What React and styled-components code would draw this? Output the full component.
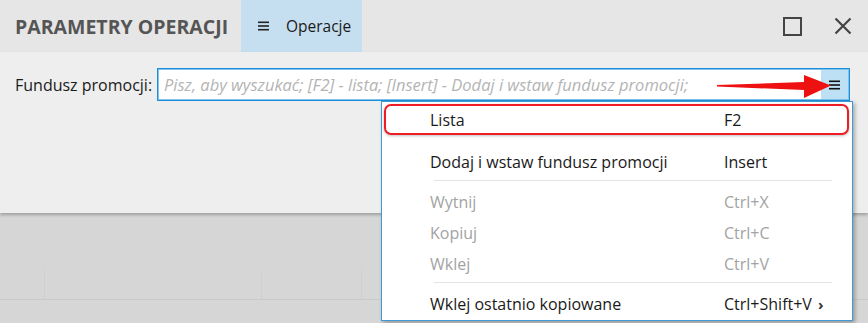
import React from "react";
import styled, { createGlobalStyle } from "styled-components";

const Global = createGlobalStyle`
  html, body { margin: 0; padding: 0; }
  body {
    width: 868px; height: 323px; overflow: hidden;
    font-family: "Open Sans", "Noto Sans", sans-serif;
    background: #d6d6d6;
  }
`;

const Page = styled.div`
  position: relative;
  width: 868px;
  height: 323px;
  display: flex;
  flex-direction: column;
  background: #d6d6d6;
`;

const Header = styled.div`
  height: 52px;
  display: flex;
  align-items: stretch;
  background: #e6e6e6;
`;

const Title = styled.div`
  display: flex;
  align-items: center;
  padding: 0 0 0 15px;
  width: 226px;
  box-sizing: border-box;
  font-size: 19.5px;
  font-weight: 700;
  color: #555555;
  white-space: nowrap;
`;

const Tab = styled.div`
  display: flex;
  align-items: center;
  gap: 17px;
  margin-left: 15px;
  padding: 0 0 0 17px;
  width: 121px;
  box-sizing: border-box;
  background: #c6dff0;
  font-size: 15.5px;
  color: #1a1a1a;
`;

const Spacer = styled.div`flex: 1;`;

const WinButtons = styled.div`
  display: flex;
  align-items: center;
  gap: 32px;
  padding-right: 16px;
`;

const Body = styled.div`
  height: 161px;
  background: #eeeeee;
  padding: 16px 18px 0 15px;
  box-sizing: border-box;
  box-shadow: 0 2px 3px rgba(0,0,0,0.25);
  position: relative;
  z-index: 1;
`;

const FieldRow = styled.div`
  display: flex;
  align-items: center;
`;

const Label = styled.div`
  width: 142px;
  font-size: 16px;
  color: #1a1a1a;
  white-space: nowrap;
`;

const Input = styled.div`
  flex: 1;
  height: 33px;
  box-sizing: border-box;
  border: 1px solid #1e8fd6;
  box-shadow: inset 0 0 0 1px #7cc3ee;
  background: #ffffff;
  display: flex;
  align-items: stretch;
  padding: 1px;
`;

const Placeholder = styled.div`
  flex: 1;
  display: flex;
  align-items: center;
  padding-left: 5px;
  font-size: 16.5px;
  font-style: italic;
  color: #b4b4b4;
  white-space: nowrap;
  overflow: hidden;
`;

const DropButton = styled.div`
  width: 27px;
  background: #bde0f5;
  display: flex;
  align-items: center;
  justify-content: center;
`;

const Lower = styled.div`
  flex: 1;
  position: relative;
  display: flex;
  flex-direction: column;
  padding-top: 57px;
`;

const GridRow = styled.div`
  height: 29px;
  display: grid;
  grid-template-columns: 45px 217px 100px 1fr;
  border-bottom: 1px solid #cacaca;
`;

const GridCell = styled.div`
  border-right: 1px dotted #c8c8c8;
`;

const Menu = styled.div`
  position: absolute;
  left: 381px;
  top: 101px;
  width: 472px;
  height: 220px;
  box-sizing: border-box;
  background: #ffffff;
  border: 1px solid #3d9ad6;
  box-shadow: 2px 2px 4px rgba(0,0,0,0.3);
  padding: 4px 3px 0 2px;
  z-index: 5;
`;

const Item = styled.div`
  height: 31px;
  display: grid;
  grid-template-columns: 44px 294px 1fr;
  align-items: center;
  box-sizing: border-box;
  font-size: 16px;
  color: ${p => (p.$disabled ? "#a3a3a3" : "#1a1a1a")};
  margin-top: ${p => (p.$marked ? "-2px" : "0")};
  margin-bottom: ${p => (p.$gap ? "11px" : "0")};
  border-radius: 7px;
  border: ${p => (p.$marked ? "2px solid #ee1c24" : "2px solid transparent")};
  box-shadow: ${p => (p.$marked ? "0 1px 3px rgba(0,0,0,0.25)" : "none")};
  white-space: nowrap;
`;

const Sep = styled.div`
  height: 1px;
  background: #e3e3e3;
  margin: 3px 17px 5px 50px;
`;

const Chevron = styled.span`
  font-size: 15px;
  font-weight: 700;
  color: #333;
  margin-left: 6px;
`;

const Arrow = styled.svg`
  position: absolute;
  left: 715px;
  top: 73px;
  z-index: 6;
`;

const Hamburger = ({ w = 11, color = "#222" }) => (
  <svg width={w} height="10" viewBox={`0 0 ${w} 10`}>
    <rect x="0" y="0.5" width={w} height="1.6" fill={color} />
    <rect x="0" y="4.2" width={w} height="1.6" fill={color} />
    <rect x="0" y="7.9" width={w} height="1.6" fill={color} />
  </svg>
);

const items = [
  { l: "Lista", s: "F2", marked: true, gap: true },
  { l: "Dodaj i wstaw fundusz promocji", s: "Insert" },
  "sep",
  { l: "Wytnij", s: "Ctrl+X", d: true },
  { l: "Kopiuj", s: "Ctrl+C", d: true },
  { l: "Wklej", s: "Ctrl+V", d: true },
  "sep",
  { l: "Wklej ostatnio kopiowane", s: "Ctrl+Shift+V", sub: true },
];

export default function App() {
  return (
    <Page>
      <Global />
      <Header>
        <Title>PARAMETRY OPERACJI</Title>
        <Tab>
          <Hamburger w={11} color="#222" />
          <span>Operacje</span>
        </Tab>
        <Spacer />
        <WinButtons>
          <svg width="19" height="19" viewBox="0 0 19 19">
            <rect x="1" y="1" width="17" height="17" fill="none" stroke="#444" strokeWidth="2" />
          </svg>
          <svg width="18" height="18" viewBox="0 0 18 18">
            <path d="M1.5 1.5 L16.5 16.5 M16.5 1.5 L1.5 16.5" stroke="#444" strokeWidth="2.2" />
          </svg>
        </WinButtons>
      </Header>
      <Body>
        <FieldRow>
          <Label>Fundusz promocji:</Label>
          <Input>
            <Placeholder>Pisz, aby wyszukać; [F2] - lista; [Insert] - Dodaj i wstaw fundusz promocji;</Placeholder>
            <DropButton>
              <Hamburger w={11} color="#111" />
            </DropButton>
          </Input>
        </FieldRow>
      </Body>
      <Lower>
        <GridRow>
          <GridCell />
          <GridCell />
          <GridCell />
          <div />
        </GridRow>
      </Lower>
      <Arrow width="120" height="28" viewBox="0 0 120 28">
        <path d="M2 12 L89 9 L89 2 L116 12.5 L89 25 L89 17 L2 13.5 Z" fill="#ee1111" />
      </Arrow>
      <Menu>
        {items.map((it, i) =>
          it === "sep" ? (
            <Sep key={i} />
          ) : (
            <Item key={i} $disabled={it.d} $marked={it.marked} $gap={it.gap}>
              <span />
              <span>{it.l}</span>
              <span>
                {it.s}
                {it.sub && <Chevron>›</Chevron>}
              </span>
            </Item>
          )
        )}
      </Menu>
    </Page>
  );
}
